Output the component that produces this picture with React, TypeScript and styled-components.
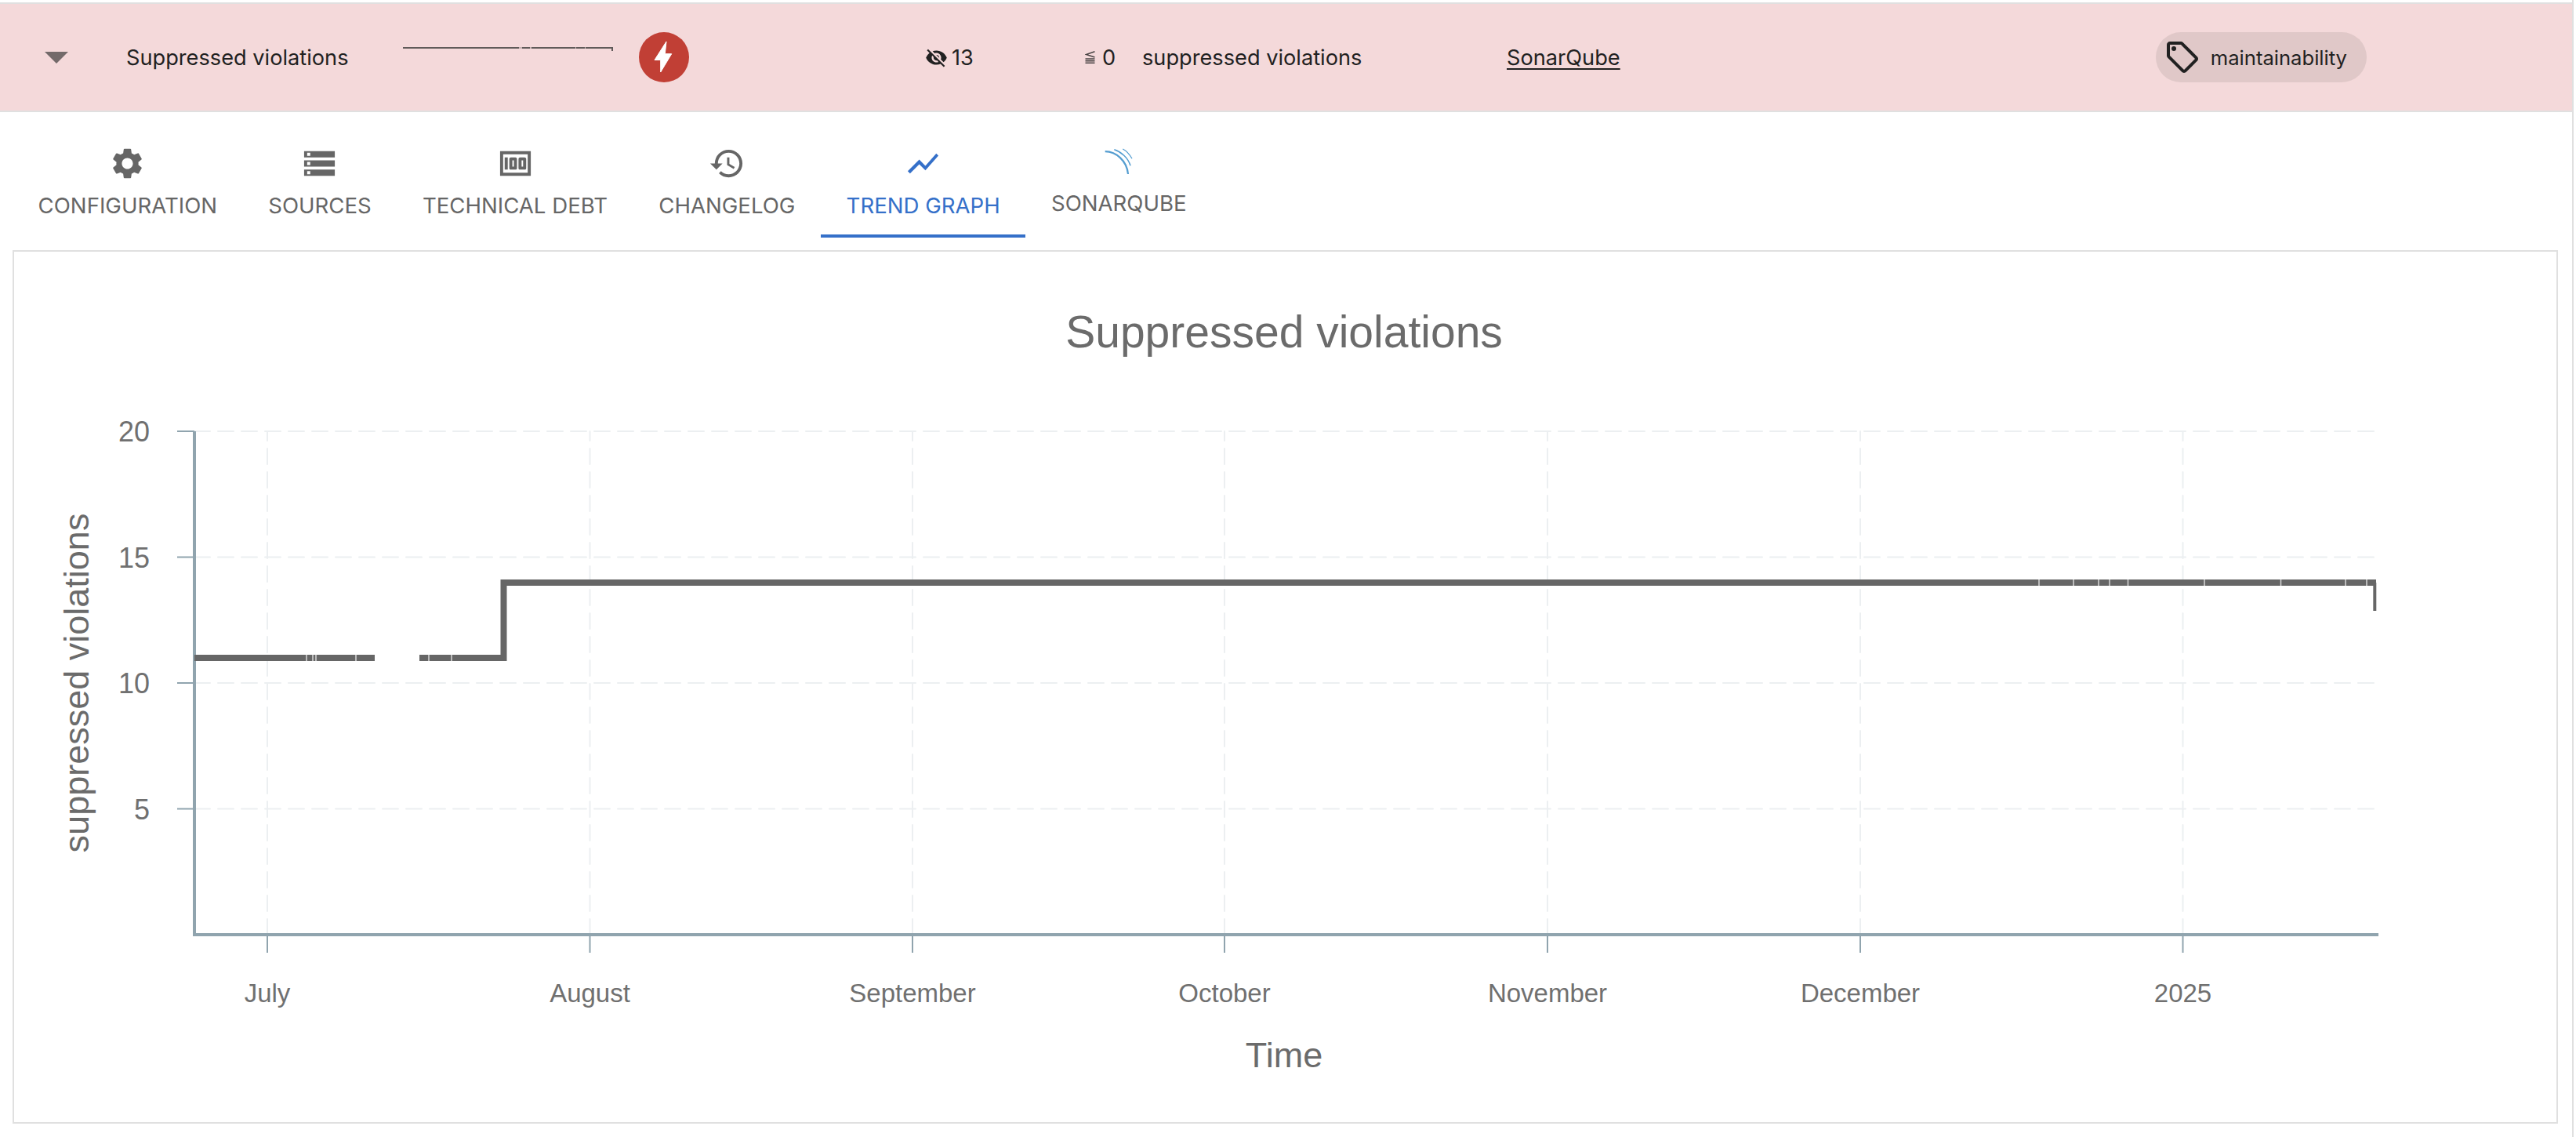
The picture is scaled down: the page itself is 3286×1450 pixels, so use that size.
import styled, { createGlobalStyle } from 'styled-components';
import { MdHistory, MdMoney, MdOutlineLocalOffer, MdSettings, MdShowChart, MdStorage, MdVisibilityOff } from 'react-icons/md';
import { IconType } from 'react-icons';

const GlobalStyle = createGlobalStyle`
  html, body {
    margin: 0;
    padding: 0;
    background: white;
    font-family: Inter, "Noto Sans", sans-serif;
  }
`;

const Page = styled.div`
  width: 3283px;
  height: 1450px;
  box-sizing: border-box;
  padding-top: 3px;
  border-right: 2px solid #e0e0e0;
`;

const MetricRow = styled.div`
  display: grid;
  grid-template-columns: 104px 353px 301px 365px 204px 73px 465px 828px 1fr;
  align-items: center;
  height: 140px;
  box-sizing: border-box;
  padding-left: 57px;
  background: #f4d9da;
  border-top: 2px solid #e0e0e0;
  border-bottom: 2px solid #e0e0e0;
  font-size: 27.2px;
  color: #212121;
`;

const Caret = styled.div`
  width: 0;
  height: 0;
  border-left: 15px solid transparent;
  border-right: 15px solid transparent;
  border-top: 15px solid #736a6a;
`;

const Status = styled.div`
  width: 64px;
  height: 64px;
  border-radius: 50%;
  background: #c13f35;
  display: flex;
  align-items: center;
  justify-content: center;
`;

const Measurement = styled.div<{ $gap: number }>`
  display: flex;
  align-items: center;
  gap: ${(p) => p.$gap}px;
`;

const SourceLink = styled.a`
  color: #212121;
  text-decoration: underline;
  text-underline-offset: 4px;
`;

const Chip = styled.div`
  display: flex;
  align-items: center;
  justify-content: space-between;
  width: 269px;
  height: 64px;
  box-sizing: border-box;
  padding: 0 25px 0 10px;
  border-radius: 32px;
  background: #e0c8c8;
  font-size: 25.6px;
`;

const TabBar = styled.div`
  display: flex;
  height: 160px;
  padding-left: 16px;
`;

const Tab = styled.div<{ $active?: boolean; $logo?: boolean }>`
  display: flex;
  flex-direction: column;
  align-items: center;
  height: 160px;
  box-sizing: border-box;
  padding: 42px 32.6px 0;
  color: ${(p) => (p.$active ? '#3570c9' : '#666666')};
  border-bottom: 4px solid ${(p) => (p.$active ? '#3570c9' : 'transparent')};
  font-size: 27.6px;
  line-height: 34px;
  white-space: nowrap;

  svg {
    display: block;
    margin-bottom: ${(p) => (p.$logo ? '19px' : '13px')};
  }
`;

const ChartPanel = styled.div`
  margin: 16px 0 0 16px;
  width: 3247px;
  height: 1114px;
  box-sizing: border-box;
  border: 2px solid #e0e0e0;
`;

const ChartSvg = styled.svg`
  display: block;
  width: 100%;
  height: 100%;
`;

const AxisTitle = styled.text`
  font-family: "Liberation Sans", Arial, sans-serif;
  font-size: 45px;
  fill: #6b6b6b;
`;

const ChartTitle = styled.text`
  font-family: "Liberation Sans", Arial, sans-serif;
  font-size: 57px;
  fill: #6b6b6b;
`;

const TickLabel = styled.text`
  font-family: "Liberation Sans", Arial, sans-serif;
  font-size: 33px;
  fill: #707070;
`;

const ValueLabel = styled(TickLabel)`
  font-size: 36px;
`;

const SonarIcon = () => (
    <svg width="48" height="38" viewBox="-1 -4 48 38" fill="none" stroke="#549dd0">
        <path d="M5.7 4.2 C20 4.5 33.5 16 35 33" strokeWidth="2.2" />
        <path d="M17.3 1.7 C26 4.5 35 12 38 22.3" strokeWidth="1.5" />
        <path d="M28.3 1 C33 3.5 37 8 40 13.3" strokeWidth="1.3" />
    </svg>
);

const BoltIcon = () => (
    <svg width="64" height="64" viewBox="0 0 64 64" fill="white">
        <path d="M35 12 L20 35.5 H27.7 V51 L41.7 27.7 H33.3 Z" stroke="white" strokeWidth="1" strokeLinejoin="round" />
    </svg>
);

const LessEqualIcon = () => (
    <svg width="13" height="16" viewBox="0 0 13 16" fill="none" stroke="#4a4545" strokeWidth="1.6">
        <path d="M12.5 0.8 L1.5 4.5 L12.5 8" />
        <path d="M0.5 10 H12.5 M0.5 12.6 H12.5 M0.5 15.2 H12.5" />
    </svg>
);

const tabs: { label: string; icon: IconType }[] = [
    { label: 'Configuration', icon: MdSettings },
    { label: 'Sources', icon: MdStorage },
    { label: 'Technical debt', icon: MdMoney },
    { label: 'Changelog', icon: MdHistory },
    { label: 'Trend graph', icon: MdShowChart },
];

const months = [
    { label: 'July', x: 341 },
    { label: 'August', x: 752.5 },
    { label: 'September', x: 1164 },
    { label: 'October', x: 1562 },
    { label: 'November', x: 1974 },
    { label: 'December', x: 2373 },
    { label: '2025', x: 2784.5 },
];

const yTicks = [
    { label: '20', y: 550 },
    { label: '15', y: 710.5 },
    { label: '10', y: 871 },
    { label: '5', y: 1031.5 },
];

// small seams where two measurements meet
const seams = [391, 399, 403, 454, 547, 576, 2601, 2645, 2677, 2691, 2714.5, 2812, 2909.5, 2992, 3019];

const Sparkline = () => (
    <svg width="270" height="64" viewBox="0 0 270 64" fill="none">
        <path d="M0 20 H268" stroke="#605a59" strokeWidth="2" />
        <path d="M267 20 V24" stroke="#605a59" strokeWidth="2" />
        <path d="M148 20 H152 M162 20 H164 M220 20 H221 M232 20 H233" stroke="#f4d9da" strokeWidth="2" opacity="0.7" />
    </svg>
);

const TrendChart = () => (
    <ChartSvg viewBox="18 321 3243 1110">
        <ChartTitle x="1638" y="443" textAnchor="middle">Suppressed violations</ChartTitle>

        {yTicks.map((tick) => (
            <g key={tick.label}>
                <line x1="248" x2="3031" y1={tick.y} y2={tick.y} stroke="#eceff1" strokeWidth="2" strokeDasharray="20 10" strokeLinecap="round" />
                <line x1="226" x2="248" y1={tick.y} y2={tick.y} stroke="#90a4ae" strokeWidth="2" />
                <ValueLabel x="191" y={tick.y + 13} textAnchor="end">{tick.label}</ValueLabel>
            </g>
        ))}

        {months.map((month) => (
            <g key={month.label}>
                <line x1={month.x} x2={month.x} y1="1192" y2="550" stroke="#eceff1" strokeWidth="2" strokeDasharray="20 10" strokeLinecap="round" />
                <line x1={month.x} x2={month.x} y1="1192" y2="1215" stroke="#90a4ae" strokeWidth="2" />
                <TickLabel x={month.x} y="1278" textAnchor="middle">{month.label}</TickLabel>
            </g>
        ))}

        <path d="M248 550 V1192 H3034" fill="none" stroke="#90a4ae" strokeWidth="4" />

        <path d="M248 839 H478 M535 839 H642.5 V743 H3031" fill="none" stroke="#666666" strokeWidth="8" />
        <path d="M3029.3 743 V779" fill="none" stroke="#666666" strokeWidth="4" />
        {seams.map((x) => (
            <line key={x} x1={x} x2={x} y1={x < 640 ? 835 : 739} y2={x < 640 ? 843 : 747} stroke="white" strokeWidth="1.5" opacity="0.75" />
        ))}

        <AxisTitle transform="translate(113 871) rotate(-90)" textAnchor="middle">suppressed violations</AxisTitle>
        <AxisTitle x="1638" y="1361" textAnchor="middle">Time</AxisTitle>
    </ChartSvg>
);

const App = () => {
    return (
        <Page>
            <GlobalStyle />
            <MetricRow>
                <Caret />
                <div>Suppressed violations</div>
                <Sparkline />
                <Status><BoltIcon /></Status>
                <Measurement $gap={5}><MdVisibilityOff size={29} />13</Measurement>
                <Measurement $gap={9}><LessEqualIcon />0</Measurement>
                <div>suppressed violations</div>
                <div><SourceLink>SonarQube</SourceLink></div>
                <Chip><MdOutlineLocalOffer size={48} />maintainability</Chip>
            </MetricRow>
            <TabBar>
                {tabs.map((tab) => (
                    <Tab key={tab.label} $active={tab.label === 'Trend graph'}>
                        <tab.icon size={47} />
                        {tab.label.toUpperCase()}
                    </Tab>
                ))}
                <Tab $logo>
                    <SonarIcon />
                    SONARQUBE
                </Tab>
            </TabBar>
            <ChartPanel>
                <TrendChart />
            </ChartPanel>
        </Page>
    );
};

export default App;
